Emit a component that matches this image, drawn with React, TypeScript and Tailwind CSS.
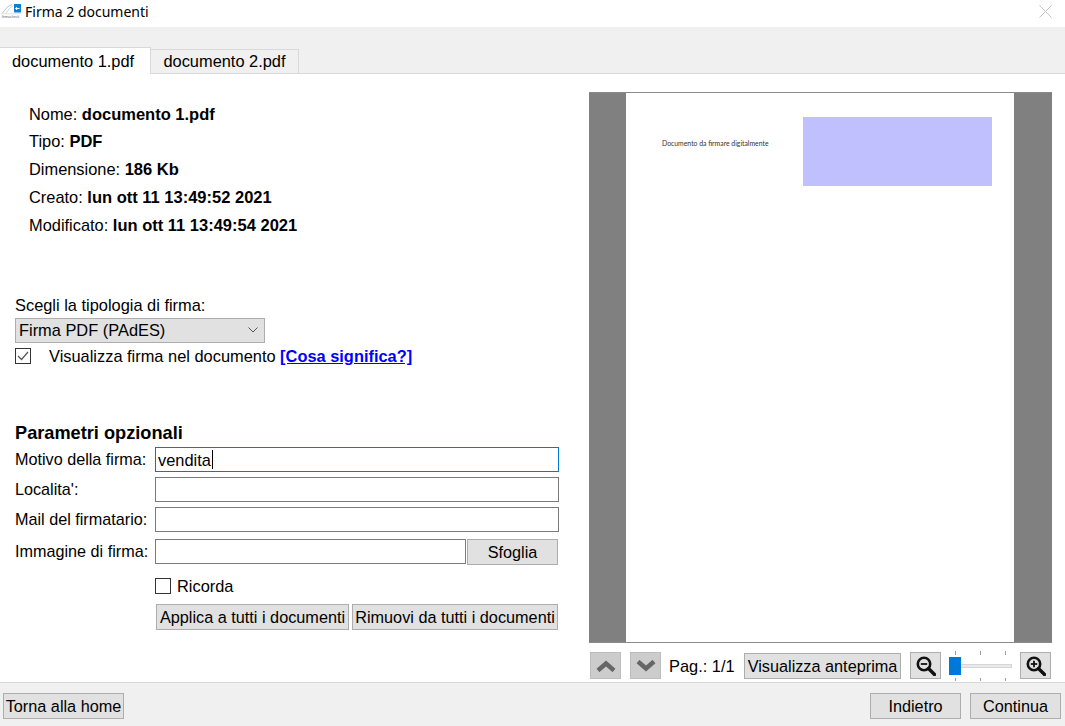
import { ReactNode } from 'react';

const fileInfo = [
  { label: 'Nome:', value: 'documento 1.pdf' },
  { label: 'Tipo:', value: 'PDF' },
  { label: 'Dimensione:', value: '186 Kb' },
  { label: 'Creato:', value: 'lun ott 11 13:49:52 2021' },
  { label: 'Modificato:', value: 'lun ott 11 13:49:54 2021' },
];

function GrayButton({ children, className = '' }: { children: ReactNode; className?: string }) {
  return (
    <button
      type="button"
      className={`flex h-[26px] shrink-0 items-center justify-center whitespace-nowrap border border-[#adadad] bg-[#e1e1e1] text-[16.25px] leading-none text-black ${className}`}
    >
      {children}
    </button>
  );
}

function Field({ label, value, focused }: { label: string; value?: string; focused?: boolean }) {
  return (
    <div className="flex h-[30px] items-center">
      <span className="w-[140px] shrink-0 whitespace-nowrap pb-[1px] text-[16.2px]">{label}</span>
      <div
        className={`flex h-[25px] w-[404px] items-center border pl-[2px] ${focused ? 'border-[#0078d7]' : 'border-[#7a7a7a]'}`}
      >
        {value}
        {focused && <span className="ml-[1px] h-[19px] w-[1px] bg-black" />}
      </div>
    </div>
  );
}

function Logo() {
  return (
    <svg width="20" height="14" viewBox="0 0 20 14" className="-mt-[1px] shrink-0">
      <path d="M1 9.5 C4 6 6 2 11 0.5" fill="none" stroke="#9fb4c8" strokeWidth="0.8" />
      <path d="M5 9.5 C7 6 9 3 13 1.5" fill="none" stroke="#c5d2de" strokeWidth="0.8" />
      <rect x="13" y="0" width="7" height="8.5" fill="#0f7fd0" />
      <path d="M14.5 4.5h4" stroke="#fff" strokeWidth="1.1" />
      <path d="M16 3 14.5 4.5 16 6" fill="none" stroke="#fff" strokeWidth="0.9" />
      <rect x="0" y="9.5" width="20" height="0.7" fill="#d4d4d4" />
      <text x="1" y="13.5" fontSize="3.6" fill="#666" fontFamily="'Liberation Sans', sans-serif">
        firmacheck
      </text>
    </svg>
  );
}

function Chevron({ up }: { up?: boolean }) {
  return (
    <svg width="20" height="12" viewBox="0 0 20 12">
      <path
        d={up ? 'M2 10.5 10 3.5 18 10.5' : 'M2 1.5 10 8.5 18 1.5'}
        fill="none"
        stroke="#666"
        strokeWidth="4.4"
        strokeLinejoin="miter"
      />
    </svg>
  );
}

function Magnifier({ plus }: { plus?: boolean }) {
  return (
    <svg width="20" height="20" viewBox="0 0 20 20">
      <circle cx="8" cy="8" r="6.2" fill="none" stroke="#111" strokeWidth="2.6" />
      <path d="M12.5 12.5l6 6" stroke="#111" strokeWidth="3.4" strokeLinecap="round" />
      <path d="M4.8 8h6.4" stroke="#111" strokeWidth="1.8" />
      {plus && <path d="M8 4.8v6.4" stroke="#111" strokeWidth="1.8" />}
    </svg>
  );
}

function ZoomSlider() {
  const ticks = [6, 31, 56];
  return (
    <div className="relative flex h-[30px] w-[63px] shrink-0 items-center">
      <div className="h-[4px] w-full border border-[#d6d6d6] bg-[#e7eae9]" />
      <div className="absolute left-0 top-[6px] h-[18px] w-[12px] bg-[#0078d7]" />
      {ticks.map((x) => (
        <div key={x}>
          <div className="absolute top-0 h-[4px] w-[1px] bg-[#a0a0a0]" style={{ left: x }} />
          <div className="absolute bottom-0 h-[3px] w-[1px] bg-[#a0a0a0]" style={{ left: x }} />
        </div>
      ))}
    </div>
  );
}

export default function App() {
  return (
    <div className="flex h-[726px] w-[1065px] flex-col overflow-hidden bg-white font-['Liberation_Sans',Arial,sans-serif] text-[16.4px] leading-none text-black">
      {/* title bar */}
      <div className="flex h-[27px] shrink-0 items-center pb-[4px] pl-[1px] pr-[13px]">
        <Logo />
        <span className="ml-[4px] font-['Noto_Sans',sans-serif] text-[14px]">Firma 2 documenti</span>
        <svg width="13" height="13" viewBox="0 0 13 13" className="ml-auto">
          <path d="M0.5 0.5l12 12M12.5 0.5l-12 12" stroke="#c4c4c4" strokeWidth="1" />
        </svg>
      </div>

      {/* tabs */}
      <div className="flex h-[47px] shrink-0 items-end border-b border-[#d9d9d9] bg-[#f0f0f0]">
        <div className="-mb-[1px] flex h-[27px] w-[151px] items-center border-r border-t border-[#d9d9d9] bg-white pl-[12px]">
          documento 1.pdf
        </div>
        <div className="flex h-[24px] w-[148px] items-center justify-center border-r border-t border-[#d9d9d9] bg-[#f0f0f0]">
          documento 2.pdf
        </div>
      </div>

      {/* body */}
      <div className="flex min-h-0 flex-1">
        <div className="w-[589px] shrink-0 pl-[15px]">
          <div className="pl-[14px] pt-[26px]">
            {fileInfo.map((row) => (
              <div key={row.label} className="flex h-[27.8px] items-center whitespace-pre">
                {row.label} <b className="text-[16.5px]">{row.value}</b>
              </div>
            ))}
          </div>

          <div className="mt-[57px] flex h-[18px] items-center">Scegli la tipologia di firma:</div>
          <div className="mt-[4px] flex h-[25px] w-[250px] items-center border border-[#adadad] bg-[#e1e1e1] pl-[3px]">
            Firma PDF (PAdES)
            <svg width="10" height="6" viewBox="0 0 10 6" className="ml-auto mr-[6px]">
              <path d="M0.5 0.5 5 5l4.5-4.5" fill="none" stroke="#555" strokeWidth="1" />
            </svg>
          </div>
          <div className="mt-[4px] flex h-[18px] items-center">
            <span className="flex h-[16px] w-[16px] items-center justify-center border border-[#333]">
              <svg width="12" height="10" viewBox="0 0 12 10">
                <path d="M1 5l3.5 3.5L11 1" fill="none" stroke="#555" strokeWidth="1.2" />
              </svg>
            </span>
            <span className="ml-[18px] whitespace-pre">
              Visualizza firma nel documento <a href="#" className="font-bold text-[#0000ff] underline">[Cosa significa?]</a>
            </span>
          </div>

          <div className="mt-[58px] flex h-[20px] items-center text-[18.2px] font-bold">Parametri opzionali</div>
          <div className="mt-[2px]">
            <Field label="Motivo della firma:" value="vendita" focused />
            <Field label="Localita':" />
            <Field label="Mail del firmatario:" />
            <div className="mt-[2px] flex h-[30px] items-center">
              <span className="w-[140px] shrink-0 whitespace-nowrap pb-[1px] text-[16.2px]">Immagine di firma:</span>
              <div className="h-[25px] w-[311px] border border-[#7a7a7a]" />
              <GrayButton className="ml-[1px] w-[91px]">Sfoglia</GrayButton>
            </div>
          </div>
          <div className="ml-[140px] mt-[10px] flex h-[18px] items-center">
            <span className="h-[16px] w-[16px] border border-[#333]" />
            <span className="ml-[6px]">Ricorda</span>
          </div>
          <div className="ml-[141px] mt-[9px] flex gap-[3px]">
            <GrayButton className="w-[193px]">Applica a tutti i documenti</GrayButton>
            <GrayButton className="w-[206px]">Rimuovi da tutti i documenti</GrayButton>
          </div>
        </div>

        {/* preview */}
        <div className="flex w-[463px] shrink-0 flex-col pt-[18px]">
          <div className="flex h-[551px] shrink-0 border-b border-t border-[#8a8a8e] bg-[#808080] pl-[37px]">
            <div className="flex w-[388px] items-start bg-white">
              <span className="ml-[36px] mt-[45px] whitespace-nowrap font-['Lato',sans-serif] text-[6.85px] leading-[10px] text-[#333]">
                Documento da firmare digitalmente
              </span>
              <div className="ml-auto mr-[22px] mt-[24px] h-[69px] w-[189px] bg-[#c0c0ff]" />
            </div>
          </div>
          <div className="mt-[9px] flex h-[27px] items-center pl-[1px]">
            <div className="flex h-[27px] w-[31px] items-center justify-center border border-[#bdbdbd] bg-[#cccccc]">
              <Chevron up />
            </div>
            <div className="ml-[9px] flex h-[27px] w-[31px] items-center justify-center border border-[#bdbdbd] bg-[#cccccc]">
              <Chevron />
            </div>
            <span className="ml-[8px] w-[66px] whitespace-nowrap pt-[1px]">Pag.: 1/1</span>
            <GrayButton className="ml-[9px] w-[157px] pt-[1px]">Visualizza anteprima</GrayButton>
            <GrayButton className="ml-[9px] !h-[27px] w-[31px]">
              <Magnifier />
            </GrayButton>
            <div className="ml-[8px]">
              <ZoomSlider />
            </div>
            <GrayButton className="ml-[8px] !h-[27px] w-[31px]">
              <Magnifier plus />
            </GrayButton>
          </div>
        </div>
      </div>

      {/* footer */}
      <div className="flex h-[44px] shrink-0 items-center border-t border-[#d9d9d9] bg-[#f0f0f0] px-[3px] pt-[3px]">
        <GrayButton className="w-[121px]">Torna alla home</GrayButton>
        <GrayButton className="ml-auto w-[91px]">Indietro</GrayButton>
        <GrayButton className="ml-[9px] mr-[1px] w-[91px]">Continua</GrayButton>
      </div>
    </div>
  );
}
